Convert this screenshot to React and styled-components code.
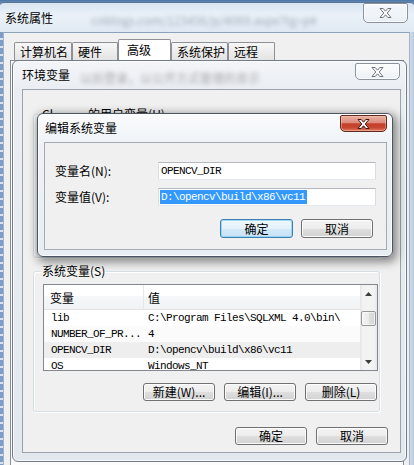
import React from "react";
import styled, { createGlobalStyle } from "styled-components";

const CJK = `"Noto Sans CJK SC", "Liberation Sans", sans-serif`;
const MONO = `"Liberation Mono", "Noto Sans CJK SC", monospace`;

const GlobalStyle = createGlobalStyle`
  html, body { margin: 0; padding: 0; background: #5b80af; }
  body { font-family: ${CJK}; font-size: 12px; color: #000; }
  #root { width: 414px; height: 465px; }
  * { box-sizing: border-box; }
`;

const Desktop = styled.div`
  position: relative;
  width: 414px;
  height: 465px;
  overflow: hidden;
  background: linear-gradient(180deg, #4b74a6 0px, #6f93c0 3px, #8fb0d6 100%);
`;

/* ---------- window chrome ---------- */
const SysWindow = styled.div`
  position: absolute;
  left: -2px;
  top: 2px;
  width: 418px;
  height: 500px;
  display: flex;
  flex-direction: column;
  border: 1px solid #5a7395;
  border-radius: 6px 6px 0 0;
  background: linear-gradient(180deg, #d9e5f2 0%, #eaf1f8 12px, #e0e9f3 29px, #bccfe4 29px, #bccfe4 100%);
`;

const EnvWindow = styled.div`
  position: absolute;
  left: 12px;
  top: 60px;
  width: 395px;
  height: 402px;
  display: flex;
  flex-direction: column;
  padding: 0 5px 8px 9px;
  border: 1px solid #737d8a;
  border-radius: 6px;
  background: linear-gradient(180deg, #f3f5f8 0%, #eaeef3 28px, #e3e8ee 100%);
  box-shadow: inset 0 0 0 1px rgba(255, 255, 255, 0.7);
`;

const EditDialog = styled.div`
  position: absolute;
  left: 37px;
  top: 113px;
  width: 356px;
  height: 144px;
  display: flex;
  flex-direction: column;
  padding: 0 5px 6px 6px;
  border: 1px solid #4a5562;
  border-radius: 6px;
  background: linear-gradient(180deg, #fafbfd 0%, #eff3f7 28px, #e8edf3 100%);
  box-shadow: 2px 3px 10px 2px rgba(0, 0, 0, 0.45), inset 0 0 0 1px rgba(255, 255, 255, 0.8);
`;

const TitleBar = styled.div`
  display: flex;
  align-items: flex-start;
  flex: none;
  height: ${(p) => p.$h}px;
  padding-left: ${(p) => p.$pl || 0}px;
  overflow: hidden;
`;

const TitleText = styled.span`
  margin-top: ${(p) => p.$mt}px;
  font-size: 12px;
  line-height: 16px;
  white-space: nowrap;
  color: #000;
`;

const GlassBlur = styled.span`
  margin-top: ${(p) => p.$mt}px;
  margin-left: ${(p) => p.$ml}px;
  font-size: 12px;
  line-height: 16px;
  white-space: nowrap;
  color: ${(p) => p.$c || "#8a96a6"};
  filter: blur(${(p) => p.$r || 1.6}px);
  opacity: 0.75;
`;

const CloseButton = styled.div`
  flex: none;
  margin-left: auto;
  margin-top: ${(p) => p.$mt}px;
  margin-right: ${(p) => p.$mr}px;
  width: ${(p) => p.$w}px;
  height: ${(p) => p.$h}px;
  display: flex;
  align-items: center;
  justify-content: center;
  border: 1px solid ${(p) => (p.$active ? "#5e2a20" : "#8c939c")};
  border-radius: 2px 2px 5px 5px;
  background: ${(p) =>
    p.$active
      ? "linear-gradient(180deg, #eab0a2 0%, #dc8b7b 45%, #c5402b 52%, #c8452f 78%, #e0805f 100%)"
      : "linear-gradient(180deg, rgba(255,255,255,0.75) 0%, rgba(255,255,255,0.35) 50%, rgba(235,240,246,0.4) 100%)"};
  box-shadow: inset 0 0 0 1px ${(p) => (p.$active ? "rgba(255,200,190,0.45)" : "rgba(255,255,255,0.7)")};
`;

const XGlyph = ({ active }) => (
  <svg width="13" height="10" viewBox="0 0 13 10">
    <polygon
      points="1,0.5 4.2,0.5 6.5,3.2 8.8,0.5 12,0.5 8.2,5 12,9.5 8.8,9.5 6.5,6.8 4.2,9.5 1,9.5 4.8,5"
      fill="#fff"
      stroke={active ? "#3c1710" : "#6f747b"}
      strokeWidth="1"
      strokeLinejoin="round"
    />
  </svg>
);

/* ---------- System Properties (back) ---------- */
const SysBody = styled.div`
  flex: 1;
  display: flex;
`;

const FrameEdge = styled.div`
  flex: none;
  width: ${(p) => p.$w}px;
  background: ${(p) =>
    p.$stripes
      ? "repeating-linear-gradient(180deg, #7b9dc8 0 6px, #d6e2f0 6px 8px)"
      : "linear-gradient(90deg, #cfdbe9, #b3c7de)"};
`;

const SysClient = styled.div`
  flex: 1;
  display: flex;
  flex-direction: column;
  background: #f0f0f0;
  border-top: 1px solid #8ca2bb;
  border-left: 1px solid #a3b4c8;
  border-right: 1px solid #a3b4c8;
`;

const TabStrip = styled.div`
  flex: none;
  display: flex;
  align-items: flex-end;
  height: 27px;
  padding-left: 10px;
`;

const Tab = styled.div`
  flex: none;
  width: ${(p) => p.$w}px;
  height: ${(p) => (p.$active ? 21 : 18)}px;
  display: flex;
  align-items: ${(p) => (p.$active ? "flex-start" : "center")};
  padding: ${(p) => (p.$active ? "2px 0 0 8px" : "0 0 0 5px")};
  border: 1px solid #8d9097;
  border-bottom: none;
  border-radius: 2px 2px 0 0;
  background: ${(p) => (p.$active ? "#fff" : "linear-gradient(180deg, #f7f7f7 0%, #ededed 50%, #e4e4e4 100%)")};
  font-size: 12px;
  line-height: 16px;
  white-space: nowrap;
`;

const TabPanel = styled.div`
  flex: 1;
  margin: 0 5px 0 6px;
  border: 1px solid #898c95;
  background: #fcfcfc;
`;

/* ---------- client areas ---------- */
const EnvClient = styled.div`
  flex: 1;
  display: flex;
  flex-direction: column;
  background: #f0f0f0;
  border: 1px solid #9aa3ad;
  padding: 17px 12px 0 10px;
`;

const DialogClient = styled.div`
  flex: 1;
  display: flex;
  flex-direction: column;
  background: #f0f0f0;
  border: 1px solid #a3aab3;
  padding: 19px 10px 0 10px;
`;

const GroupBox = styled.fieldset`
  margin: ${(p) => p.$mt || 0}px 8px 0 0;
  padding: 6px 1px 10px 9px;
  border: 1px solid #d5dfe5;
  border-radius: 3px;
  min-width: 0;
  height: ${(p) => (p.$h ? `${p.$h}px` : "auto")};
  box-shadow: inset 1px 1px 0 #fff, 1px 1px 0 #fff;
`;

const GroupLegend = styled.legend`
  padding: 0 1px;
  margin-left: -2px;
  font-size: 12px;
  line-height: 14px;
  white-space: nowrap;
`;

const LegendGap = styled.span`
  display: inline-block;
  width: ${(p) => p.$w}px;
`;

const FormGrid = styled.div`
  display: grid;
  grid-template-columns: 103px 218px;
  row-gap: 8px;
  align-items: center;
`;

const FieldLabel = styled.span`
  font-size: 12px;
  line-height: 16px;
  white-space: nowrap;
`;

const TextBox = styled.div`
  height: 18px;
  display: flex;
  align-items: center;
  padding-left: 2px;
  border: 1px solid;
  border-color: #b5b8be #d9dde3 #e3e9ef #dcdfe4;
  background: #fff;
  font-family: ${MONO};
  font-size: 11px;
  letter-spacing: -0.6px;
  white-space: nowrap;
  overflow: hidden;
`;

const Selection = styled.span`
  margin-left: -1px;
  padding: 0 2px 0 1px;
  line-height: 14px;
  background: #3399ff;
  color: #fff;
`;

const ButtonRow = styled.div`
  flex: none;
  display: flex;
  justify-content: flex-end;
  gap: ${(p) => p.$gap}px;
  margin-top: ${(p) => p.$mt}px;
  margin-right: ${(p) => p.$mr || 0}px;
`;

const Button = styled.div`
  flex: none;
  width: ${(p) => p.$w}px;
  height: ${(p) => p.$h}px;
  display: flex;
  align-items: center;
  justify-content: center;
  border: 1px solid ${(p) => (p.$default ? "#3c7fb1" : "#707070")};
  border-radius: 3px;
  background: ${(p) =>
    p.$default
      ? "linear-gradient(180deg, #f1f8fd 0%, #e4f1fb 50%, #d4e9f8 51%, #c7e2f5 100%)"
      : "linear-gradient(180deg, #f4f4f4 0%, #ececec 50%, #dfdfdf 51%, #d2d2d2 100%)"};
  box-shadow: inset 0 0 0 1px ${(p) => (p.$default ? "rgba(140,210,245,0.8)" : "rgba(255,255,255,0.85)")};
  font-size: 12px;
  line-height: 14px;
  white-space: nowrap;
`;

/* ---------- list view ---------- */
const ListView = styled.div`
  display: flex;
  height: 87px;
  border: 1px solid #828790;
  background: #fff;
  overflow: hidden;
`;

const ListBody = styled.div`
  flex: 1;
  min-width: 0;
  overflow: hidden;
`;

const ListHeader = styled.div`
  display: flex;
  height: 25px;
  border-bottom: 1px solid #e3e3e3;
  background: linear-gradient(180deg, #ffffff 0%, #ffffff 45%, #f6f7f9 46%, #f1f2f4 100%);
`;

const HeaderCell = styled.div`
  flex: ${(p) => (p.$w ? "none" : "1")};
  width: ${(p) => (p.$w ? `${p.$w}px` : "auto")};
  display: flex;
  align-items: center;
  padding-left: ${(p) => p.$pl}px;
  border-right: ${(p) => (p.$w ? "1px solid #e3e8ee" : "none")};
  font-size: 12px;
`;

const Row = styled.div`
  display: flex;
  height: 16px;
  align-items: center;
  background: ${(p) => (p.$selected ? "#eeeeee" : p.$alt ? "#fbfbfb" : "#fff")};
`;

const Cell = styled.div`
  flex: ${(p) => (p.$w ? "none" : "1")};
  width: ${(p) => (p.$w ? `${p.$w}px` : "auto")};
  padding-left: ${(p) => p.$pl}px;
  font-family: ${MONO};
  font-size: 11px;
  line-height: 16px;
  letter-spacing: -0.6px;
  white-space: nowrap;
  overflow: hidden;
`;

const ScrollBar = styled.div`
  flex: none;
  width: 17px;
  display: flex;
  flex-direction: column;
  background: linear-gradient(90deg, #e6e6e6 0%, #f3f3f3 18%, #f3f3f3 82%, #e6e6e6 100%);
`;

const ScrollArrow = styled.div`
  flex: none;
  height: 17px;
  display: flex;
  align-items: center;
  justify-content: center;
`;

const ScrollTrack = styled.div`
  flex: 1;
  padding: 9px 1px 0 1px;
`;

const Thumb = styled.div`
  height: 15px;
  border: 1px solid #979797;
  border-radius: 2px;
  background: linear-gradient(90deg, #f5f5f5 0%, #ebebeb 50%, #dedede 51%, #d6d6d6 100%);
  box-shadow: inset 0 0 0 1px rgba(255, 255, 255, 0.6);
`;

const Arrow = ({ down }) => (
  <svg width="7" height="4" viewBox="0 0 7 4">
    <polygon points={down ? "0,0 7,0 3.5,4" : "0,4 7,4 3.5,0"} fill="#3d3d3d" />
  </svg>
);

const rows = [
  { name: "lib", value: "C:\\Program Files\\SQLXML 4.0\\bin\\" },
  { name: "NUMBER_OF_PR...", value: "4", alt: true },
  { name: "OPENCV_DIR", value: "D:\\opencv\\build\\x86\\vc11", selected: true },
  { name: "OS", value: "Windows_NT" },
];

const tabs = [
  { label: "计算机名", w: 58 },
  { label: "硬件", w: 46 },
  { label: "高级", w: 53, active: true },
  { label: "系统保护", w: 57 },
  { label: "远程", w: 47 },
];

export default function App() {
  return (
    <>
      <GlobalStyle />
      <Desktop>
        <SysWindow>
          <TitleBar $h={29} $pl={6}>
            <TitleText $mt={7}>系统属性</TitleText>
            <GlassBlur $ml={38} $mt={9} $r={2.2}>
              cnblogs.com/123456/p/4069.aspx?tg=p#
            </GlassBlur>
            <CloseButton $w={45} $h={20} $mt={0} $mr={7}>
              <XGlyph />
            </CloseButton>
          </TitleBar>
          <SysBody>
            <FrameEdge $w={4} $stripes />
            <SysClient>
              <TabStrip>
                {tabs.map((t) => (
                  <Tab key={t.label} $w={t.w} $active={t.active}>
                    {t.label}
                  </Tab>
                ))}
              </TabStrip>
              <TabPanel />
            </SysClient>
            <FrameEdge $w={5} />
          </SysBody>
        </SysWindow>

        <EnvWindow>
          <TitleBar $h={28}>
            <TitleText $mt={6}>环境变量</TitleText>
            <GlassBlur $ml={10} $mt={9} $c="#8f8f8f" $r={2}>
              以后登录，以公开方式管理的显示
            </GlassBlur>
            <CloseButton $w={45} $h={17} $mt={2} $mr={1}>
              <XGlyph />
            </CloseButton>
          </TitleBar>
          <EnvClient>
            <GroupBox $h={151}>
              <GroupLegend>
                Cl
                <LegendGap $w={35} />
                的用户变量(U)
              </GroupLegend>
            </GroupBox>
            <GroupBox $mt={6}>
              <GroupLegend>系统变量(S)</GroupLegend>
              <ListView>
                <ListBody>
                  <ListHeader>
                    <HeaderCell $w={100} $pl={6}>
                      变量
                    </HeaderCell>
                    <HeaderCell $pl={4}>值</HeaderCell>
                  </ListHeader>
                  {rows.map((r) => (
                    <Row key={r.name} $selected={r.selected} $alt={r.alt}>
                      <Cell $w={100} $pl={7}>
                        {r.name}
                      </Cell>
                      <Cell $pl={4}>{r.value}</Cell>
                    </Row>
                  ))}
                </ListBody>
                <ScrollBar>
                  <ScrollArrow>
                    <Arrow />
                  </ScrollArrow>
                  <ScrollTrack>
                    <Thumb />
                  </ScrollTrack>
                  <ScrollArrow>
                    <Arrow down />
                  </ScrollArrow>
                </ScrollBar>
              </ListView>
              <ButtonRow $gap={9} $mt={12} $mr={1}>
                <Button $w={72} $h={18}>新建(W)...</Button>
                <Button $w={72} $h={18}>编辑(I)...</Button>
                <Button $w={72} $h={18}>删除(L)</Button>
              </ButtonRow>
            </GroupBox>
            <ButtonRow $gap={9} $mt={15}>
              <Button $w={72} $h={18}>确定</Button>
              <Button $w={72} $h={18}>取消</Button>
            </ButtonRow>
          </EnvClient>
        </EnvWindow>

        <EditDialog>
          <TitleBar $h={28} $pl={1}>
            <TitleText $mt={6}>编辑系统变量</TitleText>
            <CloseButton $active $w={47} $h={17} $mt={1} $mr={0}>
              <XGlyph active />
            </CloseButton>
          </TitleBar>
          <DialogClient>
            <FormGrid>
              <FieldLabel>变量名(N):</FieldLabel>
              <TextBox>OPENCV_DIR</TextBox>
              <FieldLabel>变量值(V):</FieldLabel>
              <TextBox>
                <Selection>{"D:\\opencv\\build\\x86\\vc11"}</Selection>
              </TextBox>
            </FormGrid>
            <ButtonRow $gap={8} $mt={13} $mr={3}>
              <Button $w={73} $h={19} $default>
                确定
              </Button>
              <Button $w={72} $h={19}>
                取消
              </Button>
            </ButtonRow>
          </DialogClient>
        </EditDialog>
      </Desktop>
    </>
  );
}
